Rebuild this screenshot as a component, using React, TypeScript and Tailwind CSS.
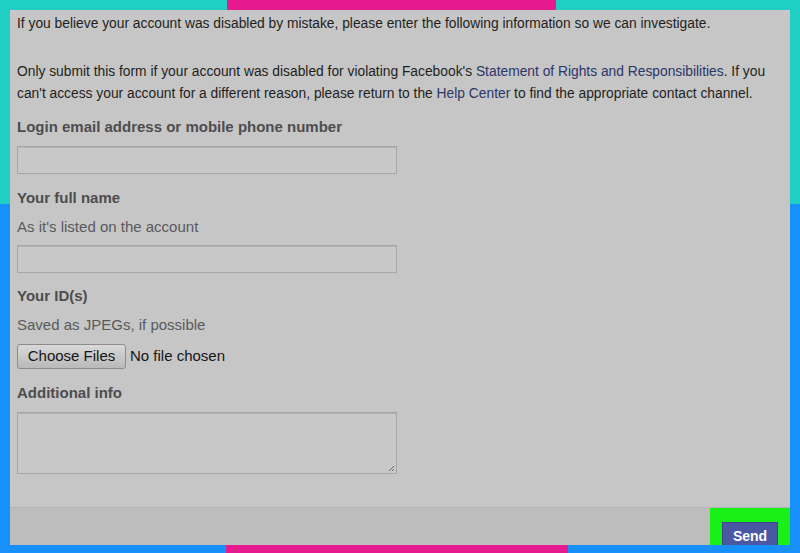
import React from "react";

const Label: React.FC<{ children: React.ReactNode; className?: string }> = ({ children, className = "" }) => (
  <div className={`h-[22px] leading-[22px] text-[15px] font-bold text-[#4d4d4f] ${className}`}>{children}</div>
);

const Hint: React.FC<{ children: React.ReactNode; className?: string }> = ({ children, className = "" }) => (
  <div className={`h-[22px] leading-[22px] text-[15px] text-[#5a5a5c] ${className}`}>{children}</div>
);

export default function App() {
  return (
    <div className="w-[800px] h-[553px] flex flex-col overflow-hidden bg-[#1890fb] font-['Liberation_Sans',Arial,sans-serif]">
      {/* top frame */}
      <div className="h-[10px] flex shrink-0">
        <div className="w-[227px] bg-[#1fcfc4]" />
        <div className="w-[329px] bg-[#e6198f]" />
        <div className="flex-1 bg-[#1fcfc4]" />
      </div>

      <div className="h-[535px] flex shrink-0">
        <div className="w-[10px] flex flex-col">
          <div className="h-[194px] bg-[#1fcfc4]" />
          <div className="flex-1 bg-[#1890fb]" />
        </div>

        <div className="w-[780px] bg-[#c6c6c6] flex flex-col">
          <div className="flex-1 pl-[7px] pt-[3px] text-[#1f1f21]">
            <p className="h-[22px] leading-[22px] text-[13.8px] whitespace-nowrap">
              If you believe your account was disabled by mistake, please enter the following information so we can investigate.
            </p>
            <p className="mt-[26px] h-[44px] leading-[22px] text-[13.8px] w-[762px]">
              Only submit this form if your account was disabled for violating Facebook's{" "}
              <span className="text-[#2c3566]">Statement of Rights and Responsibilities</span>. If you can't access your account for a different reason, please return to the{" "}
              <span className="text-[#2c3566]">Help Center</span> to find the appropriate contact channel.
            </p>

            <Label className="mt-[11px]">Login email address or mobile phone number</Label>
            <div className="mt-[8px] w-[380px] h-[28px] border border-[#a6a6a6] bg-[#c8c8c8] shadow-[inset_0_1px_0_#b4b4b4]" />

            <Label className="mt-[13px]">Your full name</Label>
            <Hint className="mt-[7px]">As it's listed on the account</Hint>
            <div className="mt-[7px] w-[380px] h-[28px] border border-[#a6a6a6] bg-[#c8c8c8] shadow-[inset_0_1px_0_#b4b4b4]" />

            <Label className="mt-[12px]">Your ID(s)</Label>
            <Hint className="mt-[7px]">Saved as JPEGs, if possible</Hint>
            <div className="mt-[8px] flex items-center h-[25px]">
              <div className="w-[109px] h-[25px] flex items-center justify-center rounded-[3px] border border-[#8c8c8c] bg-gradient-to-b from-[#d9d9d9] to-[#b9b9b9] text-[15px] text-[#151515]">
                Choose Files
              </div>
              <span className="ml-[4px] text-[15px] text-[#151515]">No file chosen</span>
            </div>

            <Label className="mt-[13px]">Additional info</Label>
            <div className="relative mt-[8px] w-[380px] h-[62px] border border-[#a6a6a6] bg-[#c8c8c8] shadow-[inset_0_1px_0_#b4b4b4]">
              <svg className="absolute right-[1px] bottom-[1px]" width="7" height="7" viewBox="0 0 7 7">
                <path d="M6 1 L1 6 M6 4 L4 6" stroke="#6d6d6d" strokeWidth="1" />
              </svg>
            </div>
          </div>

          {/* footer */}
          <div className="h-[38px] shrink-0 flex justify-end bg-[#bdbdbd] border-t border-[#b4b4b4]">
            <div className="w-[80px] h-full bg-[#19f016] flex justify-center overflow-hidden">
              <div className="mt-[14px] w-[56px] h-[30px] bg-[#4a58a4] border border-[#3b478c] flex justify-center pt-[3px] text-[14px] font-bold text-white">
                Send
              </div>
            </div>
          </div>
        </div>

        <div className="w-[10px] flex flex-col">
          <div className="h-[194px] bg-[#1fcfc4]" />
          <div className="flex-1 bg-[#1890fb]" />
        </div>
      </div>

      {/* bottom frame */}
      <div className="flex-1 flex">
        <div className="w-[226px] bg-[#1890fb]" />
        <div className="w-[342px] bg-[#e6198f]" />
        <div className="flex-1 bg-[#1890fb]" />
      </div>
    </div>
  );
}
